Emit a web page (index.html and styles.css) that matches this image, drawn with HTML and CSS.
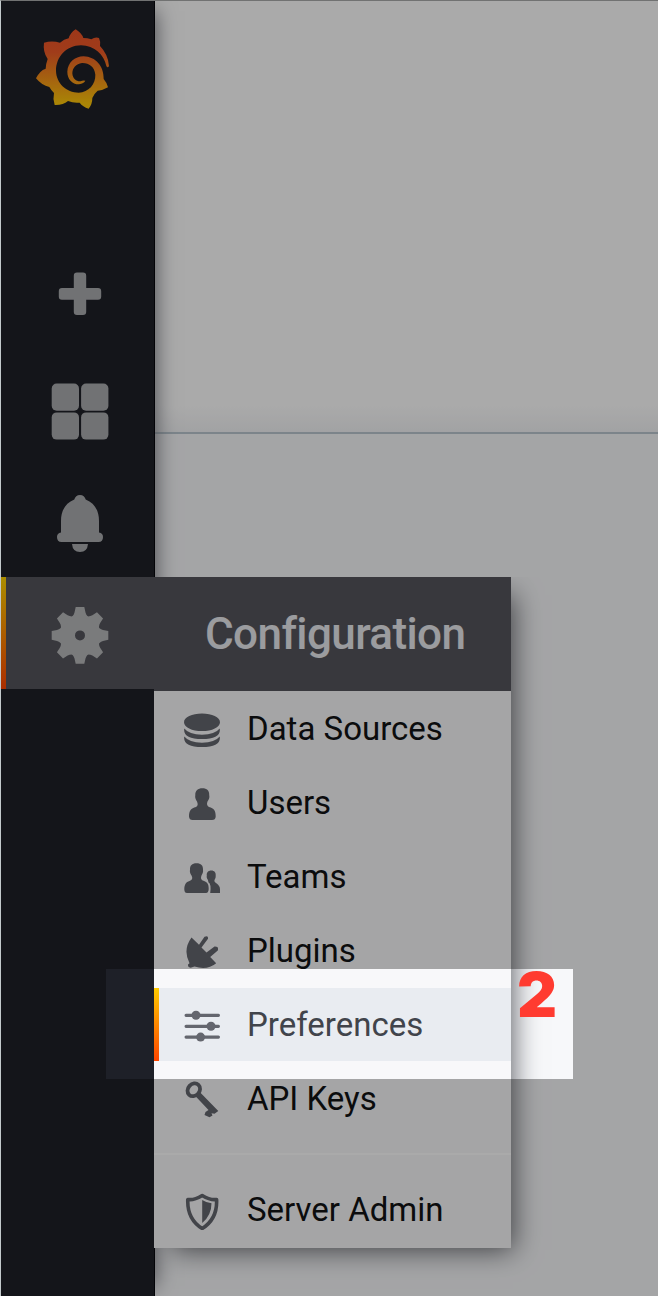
FILE: index.html
```html
<!DOCTYPE html>
<html lang="en">
<head>
<meta charset="utf-8">
<title>Configuration</title>
<link rel="stylesheet" href="styles.css">
</head>
<body>
<div class="app">
  <nav class="sidebar">
    <svg class="logo" viewBox="3 3 456 717">
      <defs><linearGradient id="brand" gradientUnits="userSpaceOnUse" x1="0" y1="310" x2="0" y2="90"><stop offset="0" stop-color="#ffc80a"/><stop offset=".7" stop-color="#f05a28"/><stop offset="1" stop-color="#ee5426"/></linearGradient></defs>
      <path fill="url(#brand)" d="M227 88Q245 99 250 114Q262 114 274 118Q286 110 297 114Q302 124 300 138Q325 164 327 198Q323 206 319 198C312 164 284 137 243 136C198 137 168 171 168 213C169 250 199 278 236 278C266 277 287 252 286 224C284 200 266 188 246 189C228 191 217 204 217 220C218 237 230 245 242 244Q248 240 256 242Q252 250 237 253C216 253 202 237 202 215C203 188 224 169 251 169C287 170 312 199 311 237Q322 250 324 262Q309 271 293 272Q282 281 277 294Q277 313 266 326Q248 320 239 308Q220 310 204 303Q189 316 164 315Q158 296 162 279Q153 270 148 261Q125 256 108 235Q119 212 137 206Q138 190 143 177Q128 155 132 128Q156 121 180 128Q192 118 206 115Q211 98 227 88Z"/>
    </svg>
    <svg class="nav-item" viewBox="1 240 152 112"><path class="glyph" d="M77 272.500h6q3.200 0 3.200 3.200V288H98q3.200 0 3.200 3.200v5.400q0 3.200-3.200 3.200H86.200v12q0 3.200-3.200 3.200h-6q-3.200 0-3.200-3.200v-12H62q-3.200 0-3.200-3.200v-5.400q0-3.200 3.200-3.200h11.800v-12.300q0-3.200 3.200-3.200Z"/></svg>
    <svg class="nav-item" viewBox="1 352 152 112"><g class="glyph"><rect x="51.700" y="383.500" width="27.300" height="27.200" rx="5"/><rect x="81.100" y="383.500" width="27.300" height="27.200" rx="5"/><rect x="51.700" y="412.400" width="27.300" height="27.200" rx="5"/><rect x="81.100" y="412.400" width="27.300" height="27.200" rx="5"/></g></svg>
    <svg class="nav-item" viewBox="1 464 152 112"><path class="glyph" d="M80 495C83 495 85 497 85.700 499.600C95 503.500 99 511 99 521V532.400Q103 533 103 537Q103 542 98.500 542H61.500Q57 542 57 537Q57 533 61 532.400V521C61 511 65 503.500 74.300 499.600C75 497 77 495 80 495ZM72 544H88Q87.300 552 80 552Q72.700 552 72 544Z"/></svg>
    <div class="nav-item active">
      <svg class="gear" viewBox="1 577 152 112"><defs><path id="tooth" d="M-11 -17Q-6.500 -19 -5.500 -23L-4.300 -28.300H4.300L5.500 -23Q6.500 -19 11 -17Z"/></defs>
      <g class="glyph" transform="translate(80 635.4)"><path fill-rule="evenodd" d="M0-20a20 20 0 1 1 0 40a20 20 0 1 1 0-40ZM0-5a5 5 0 1 0 0 10a5 5 0 1 0 0-10Z"/><use href="#tooth"/><use href="#tooth" transform="rotate(45)"/><use href="#tooth" transform="rotate(90)"/><use href="#tooth" transform="rotate(135)"/><use href="#tooth" transform="rotate(180)"/><use href="#tooth" transform="rotate(225)"/><use href="#tooth" transform="rotate(270)"/><use href="#tooth" transform="rotate(315)"/></g></svg>
    </div>
  </nav>
  <main class="content"><header class="page-header"></header></main>

  <section class="flyout">
    <h1 class="title">Configuration</h1>
    <ul class="menu">
      <li class="item"><svg class="icon" viewBox="184 709 36 40"><path d="M202 713.500c10 0 18 3.500 18 8.700s-8 8.800-18 8.800-18-3.600-18-8.800 8-8.700 18-8.700ZM184.300 728.500Q189 734.500 202 734.700Q215 734.500 219.700 728.500Q221.500 738.800 202 739Q182.500 738.800 184.300 728.500ZM184.300 736.500Q189 742.500 202 742.700Q215 742.500 219.700 736.500Q221.500 746.800 202 747Q182.500 746.800 184.300 736.500Z"/></svg><span>Data Sources</span></li>
      <li class="item"><svg class="icon" viewBox="184 783 36 40"><path d="M202.300 788.300C207 788.300 209.500 791 209.200 795C210 798 208.500 800 207.500 801.500C206.500 804 207 806 209 807C214 808.500 215.700 810.500 215.700 816.500Q215.500 820 212 820H192.500Q189.300 820 189 816.500C189 810.500 191 808.500 196 807C198 806 198 804 197 801.500C196 800 194.700 798 195.300 795C195 791 198 788.300 202.300 788.300Z"/></svg><span>Users</span></li>
      <li class="item"><svg class="icon" viewBox="184 857 36 40"><path d="M196.500 863.200C201 863.200 203.200 865.500 203 869.500C203.500 872.500 202.300 874 201.500 875.500C200.500 878.500 201 880 204 881C207.500 882.500 208.700 884 208.700 889Q208.500 893 206 893H187Q184.500 893 184.300 889.500C184.300 884.500 186 882 189.500 881C192.500 880 192.800 878 191.500 875.500C190.500 874 189.500 872.500 190 869.500C189.800 865.500 192 863.200 196.500 863.200ZM211.300 870.400C214.500 870.400 216 872.500 215.700 875.500C216 878 214.700 879 214.400 880.500C214 883 220 884 220 889V893H210.200Q211.500 884 208.400 882.200Q208.300 881 207.800 879.700C206.500 878 206.600 877 206.800 875.500C206.400 872.500 208 870.400 211.300 870.400Z"/></svg><span>Teams</span></li>
      <li class="item"><svg class="icon" viewBox="184 931 36 40"><path d="M191.500 937.600L199 944.700L204.500 936.800Q208.500 934.800 208 938.800L201.500 947.500L206.500 952.500L214.500 946.500Q219 946.200 217.800 950.500L210.200 957L216.200 963.200Q207.500 970.500 194.500 966.600L190.600 967.700Q187.500 967.500 188 964.500L189.500 963.200Q182.500 950 191.500 937.600Z"/></svg><span>Plugins</span></li>
      <li class="item selected"><svg class="icon" viewBox="184 1005 36 40"><path d="M186 1013.700h32.500q1.500 0 1.500 1.600t-1.500 1.600h-32.500q-1.500 0-1.500-1.600t1.500-1.600ZM186 1024.700h32.500q1.500 0 1.500 1.600t-1.500 1.600h-32.500q-1.500 0-1.500-1.600t1.500-1.600ZM186 1035.500h32.500q1.500 0 1.500 1.600t-1.500 1.600h-32.500q-1.500 0-1.500-1.600t1.500-1.600Z"/><circle cx="196" cy="1015.300" r="4.500"/><circle cx="211" cy="1026.300" r="4.500"/><circle cx="200.600" cy="1037.100" r="4.500"/></svg><span>Preferences</span></li>
      <li class="item"><svg class="icon" viewBox="184 1079 36 40"><ellipse cx="193.800" cy="1089.800" rx="5.800" ry="6.800" transform="rotate(43 193.800 1089.800)" fill="none" stroke="currentColor" stroke-width="3.800"/><path d="M195.800 1096.500L200 1092.300L218.300 1111L214.500 1113.700L211.500 1113.300L212.500 1115.500L209.500 1117.200L204.500 1115L205.500 1112L208.500 1110Z"/></svg><span>API Keys</span></li>
    </ul>
    <ul class="menu secondary">
      <li class="item"><svg class="icon" viewBox="184 1190 36 40"><path fill="none" stroke="currentColor" stroke-width="3.600" stroke-linejoin="round" d="M202.200 1195.500Q194 1200.500 187.800 1199.500Q187 1219 202.200 1228.500Q217.500 1219 216.600 1199.500Q210.500 1200.500 202.200 1195.500Z"/><path d="M202.200 1200Q207 1203 211.500 1203.300Q211.500 1215.500 202.200 1223Z"/></svg><span>Server Admin</span></li>
    </ul>
  </section>
  <div class="spotlight"><span class="step">2</span></div>
</div>
</body>
</html>
```
FILE: styles.css
```css
* { box-sizing: border-box; }
body { margin: 0; font-family: Roboto, "Liberation Sans", sans-serif; overflow: hidden; }
.app {
  position: relative;
  display: flex;
  width: 658px;
  height: 1296px;
  overflow: hidden;
  border-top: 1px solid #717272;
  border-left: 1px solid #c3cacc;
}
.sidebar {
  position: relative;
  z-index: 1;
  flex: 0 0 153px;
  background: #1e2028;
  border-right: 1px solid #06060c;
  box-shadow: 10px 0 20px -10px #6a6b73;
}
.logo { display: block; width: 152px; height: 239px; }
.nav-item { display: block; width: 152px; height: 112px; }
.glyph { fill: #aaabae; }
.active {
  width: 153px;
  margin-top: 1px;
  border-left: 5px solid;
  border-image: linear-gradient(#ffd500, #ff4400) 1;
  background: #54555c;
}
.active .glyph { fill: #b8b9bb; }
.gear { display: block; width: 152px; height: 112px; margin-left: -5px; }
.content { flex: 1; background: #f7f8fa; }
.page-header {
  height: 433px;
  background: linear-gradient(#fff 0, #fff 405px, #f3f4f6 431px);
  border-bottom: 2px solid #bac7d0;
}
.flyout {
  position: absolute;
  z-index: 2;
  left: 153px;
  top: 576px;
  width: 357px;
  height: 671px;
  background: #f8f8fa;
  box-shadow: 10px 10px 26px -8px #5c5e64;
  clip-path: inset(0 -60px -60px 0);
}
.title {
  height: 114px;
  margin: 0;
  padding-left: 51px;
  background: #54555c;
  color: #e9eaef;
  font-size: 44px;
  font-weight: 500;
  letter-spacing: -.6px;
  line-height: 114px;
  white-space: nowrap;
}
.menu { margin: 0; padding: 1px 0 0; list-style: none; }
.item {
  display: flex;
  align-items: center;
  gap: 27px;
  height: 74px;
  padding-left: 30px;
  color: #111214;
  font-size: 33px;
  line-height: 38px;
  white-space: nowrap;
}
.icon { width: 36px; height: 40px; color: #64666e; fill: currentColor; }
.selected {
  height: 73px;
  margin-bottom: 1px;
  padding-left: 25px;
  border-left: 5px solid;
  border-image: linear-gradient(#ffcc00, #ff4400) 1;
  background: #e9ecf1;
  color: #41444b;
}
.secondary { margin-top: 17px; padding-top: 18px; border-top: 2px solid #fff; }
.spotlight {
  position: absolute;
  z-index: 3;
  left: 105px;
  top: 968px;
  width: 467px;
  height: 110px;
  box-shadow: 0 0 0 1300px rgba(0, 0, 0, .333);
}
.step {
  position: absolute;
  left: 411px;
  top: -12px;
  color: #ff3b30;
  font: 900 62px/75px Inter, sans-serif;
}
```
